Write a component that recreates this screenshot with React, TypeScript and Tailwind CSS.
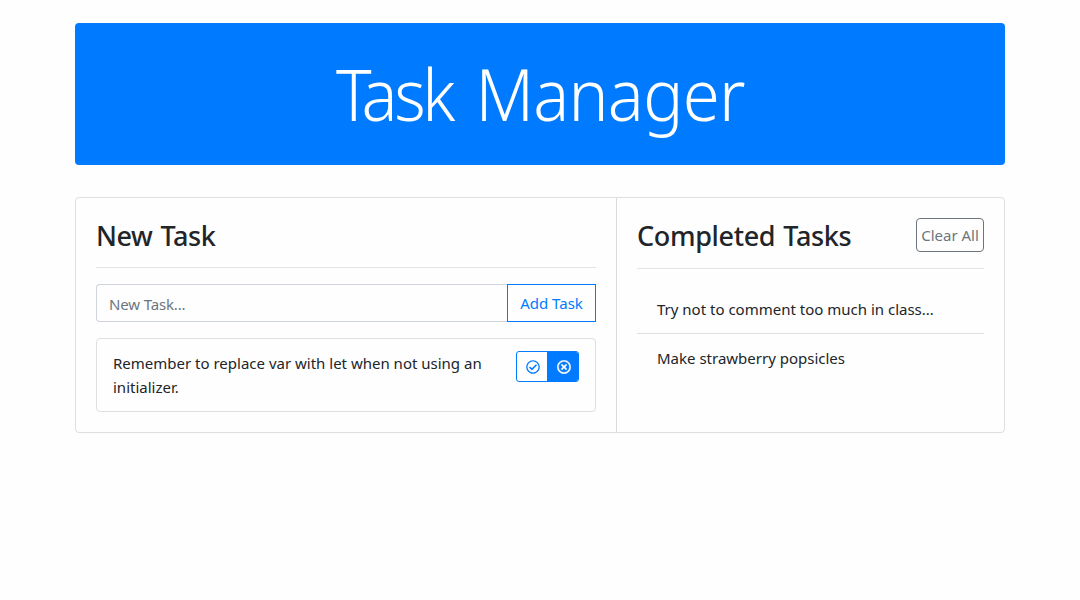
import { useState } from "react";
import { FaRegCheckCircle, FaRegTimesCircle } from "react-icons/fa";

const completed = ["Try not to comment too much in class...", "Make strawberry popsicles"];

export default function App() {
  const [draft, setDraft] = useState("");

  return (
    <div className="min-h-[600px] bg-[#fefefe] pt-[23px] font-['Noto_Sans','Open_Sans',sans-serif] text-[15px] leading-6 text-[#212529]">
      <div className="mx-auto w-[930px]">
        <header className="flex h-[142px] items-center justify-center rounded bg-[#007bff] pb-px">
          <h1 className="scale-x-[0.945] text-[71px] leading-[86px] font-light tracking-[-0.7px] whitespace-nowrap text-white [word-spacing:7px]">
            <span className="tracking-[-10.5px]">T</span>
            <span className="tracking-[-3.6px]">ask</span> Manager
          </h1>
        </header>

        <main className="mt-8 flex h-[236px] rounded border border-[#dfdfdf]">
          <section className="w-[541px] border-r border-[#d9dbe0] p-5">
            <h2 className="h-[49px] text-[27px] leading-[36px] font-medium tracking-[-0.45px] [word-spacing:1.5px]">New Task</h2>
            <div className="border-t border-[#e4e4e4]" />
            <form className="mt-4 flex h-[38px]" onSubmit={(e) => e.preventDefault()}>
              <input
                value={draft}
                onChange={(e) => setDraft(e.target.value)}
                placeholder="New Task..."
                className="w-[411px] rounded-l border border-r-0 border-[#ced4da] px-3 pt-[2px] tracking-[-0.15px] outline-none placeholder:text-[#6c757d]"
              />
              <button className="flex-1 border border-[#007bff] text-[#007bff]">Add Task</button>
            </form>
            <article className="mt-4 flex h-[74px] justify-between rounded border border-[#dfdfdf] px-4 py-3">
              <p className="w-[390px]">Remember to replace var with let when not using an initializer.</p>
              <div className="flex h-[31px] w-[63px] overflow-hidden rounded-[3px] border border-[#007bff] text-sm text-[#007bff]">
                <button aria-label="Complete" className="flex w-[30px] items-center justify-center pl-px">
                  <FaRegCheckCircle />
                </button>
                <button aria-label="Delete" className="flex flex-1 items-center justify-center bg-[#007bff] pl-[2px] text-white">
                  <FaRegTimesCircle stroke="currentColor" strokeWidth={14} />
                </button>
              </div>
            </article>
          </section>

          <section className="flex-1 p-5">
            <div className="flex h-[50px] items-start justify-between">
              <h2 className="text-[27px] leading-[36px] font-medium tracking-[-0.35px] whitespace-nowrap [word-spacing:1.5px]">Completed Tasks</h2>
              <button className="h-[34px] w-[68px] rounded border border-[#6c757d] whitespace-nowrap text-[#6c757d]">Clear All</button>
            </div>
            <div className="border-t border-[#e4e4e4]" />
            <ul className="mt-4">
              {completed.map((task) => (
                <li key={task} className="h-[49px] border-b border-[#dfdfdf] px-5 py-3 last:border-b-0">{task}</li>
              ))}
            </ul>
          </section>
        </main>
      </div>
    </div>
  );
}
